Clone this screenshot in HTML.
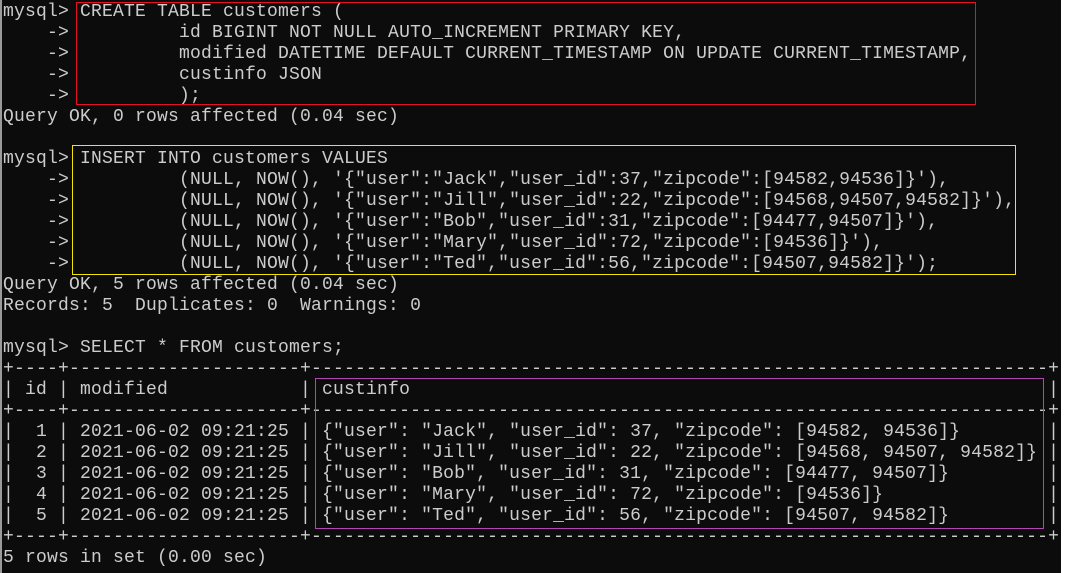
<!DOCTYPE html>
<html><head><meta charset="utf-8"><style>
html,body{margin:0;padding:0;}
body{width:1065px;height:573px;background:#fff;position:relative;overflow:hidden;}
#term{position:absolute;left:0;top:0;width:1061px;height:573px;background:#0c0c0c;border-left:2px solid #9a9a9a;box-sizing:border-box;}
pre{position:absolute;left:1px;top:2px;margin:0;font-family:"Liberation Mono",monospace;font-size:18px;letter-spacing:0.2px;line-height:21px;color:#cccccc;white-space:pre;}
.box{position:absolute;border:1px solid;box-sizing:border-box;}
</style></head><body>
<div id="term">
<pre>mysql> CREATE TABLE customers (
    ->          id BIGINT NOT NULL AUTO_INCREMENT PRIMARY KEY,
    ->          modified DATETIME DEFAULT CURRENT_TIMESTAMP ON UPDATE CURRENT_TIMESTAMP,
    ->          custinfo JSON
    ->          );
Query OK, 0 rows affected (0.04 sec)

mysql> INSERT INTO customers VALUES
    ->          (NULL, NOW(), '{"user":"Jack","user_id":37,"zipcode":[94582,94536]}'),
    ->          (NULL, NOW(), '{"user":"Jill","user_id":22,"zipcode":[94568,94507,94582]}'),
    ->          (NULL, NOW(), '{"user":"Bob","user_id":31,"zipcode":[94477,94507]}'),
    ->          (NULL, NOW(), '{"user":"Mary","user_id":72,"zipcode":[94536]}'),
    ->          (NULL, NOW(), '{"user":"Ted","user_id":56,"zipcode":[94507,94582]}');
Query OK, 5 rows affected (0.04 sec)
Records: 5  Duplicates: 0  Warnings: 0

mysql> SELECT * FROM customers;
+----+---------------------+-------------------------------------------------------------------+
| id | modified            | custinfo                                                          |
+----+---------------------+-------------------------------------------------------------------+
|  1 | 2021-06-02 09:21:25 | {"user": "Jack", "user_id": 37, "zipcode": [94582, 94536]}        |
|  2 | 2021-06-02 09:21:25 | {"user": "Jill", "user_id": 22, "zipcode": [94568, 94507, 94582]} |
|  3 | 2021-06-02 09:21:25 | {"user": "Bob", "user_id": 31, "zipcode": [94477, 94507]}         |
|  4 | 2021-06-02 09:21:25 | {"user": "Mary", "user_id": 72, "zipcode": [94536]}               |
|  5 | 2021-06-02 09:21:25 | {"user": "Ted", "user_id": 56, "zipcode": [94507, 94582]}         |
+----+---------------------+-------------------------------------------------------------------+
5 rows in set (0.00 sec)</pre>
</div>
<div class="box" style="left:76px;top:2px;width:900px;height:103px;border-color:#e81123;"></div>
<div class="box" style="left:72px;top:145px;width:944px;height:130px;border-color:#f4e400;"></div>
<div class="box" style="left:315px;top:378px;width:729px;height:151px;border-color:#b545b5;"></div>
</body></html>
